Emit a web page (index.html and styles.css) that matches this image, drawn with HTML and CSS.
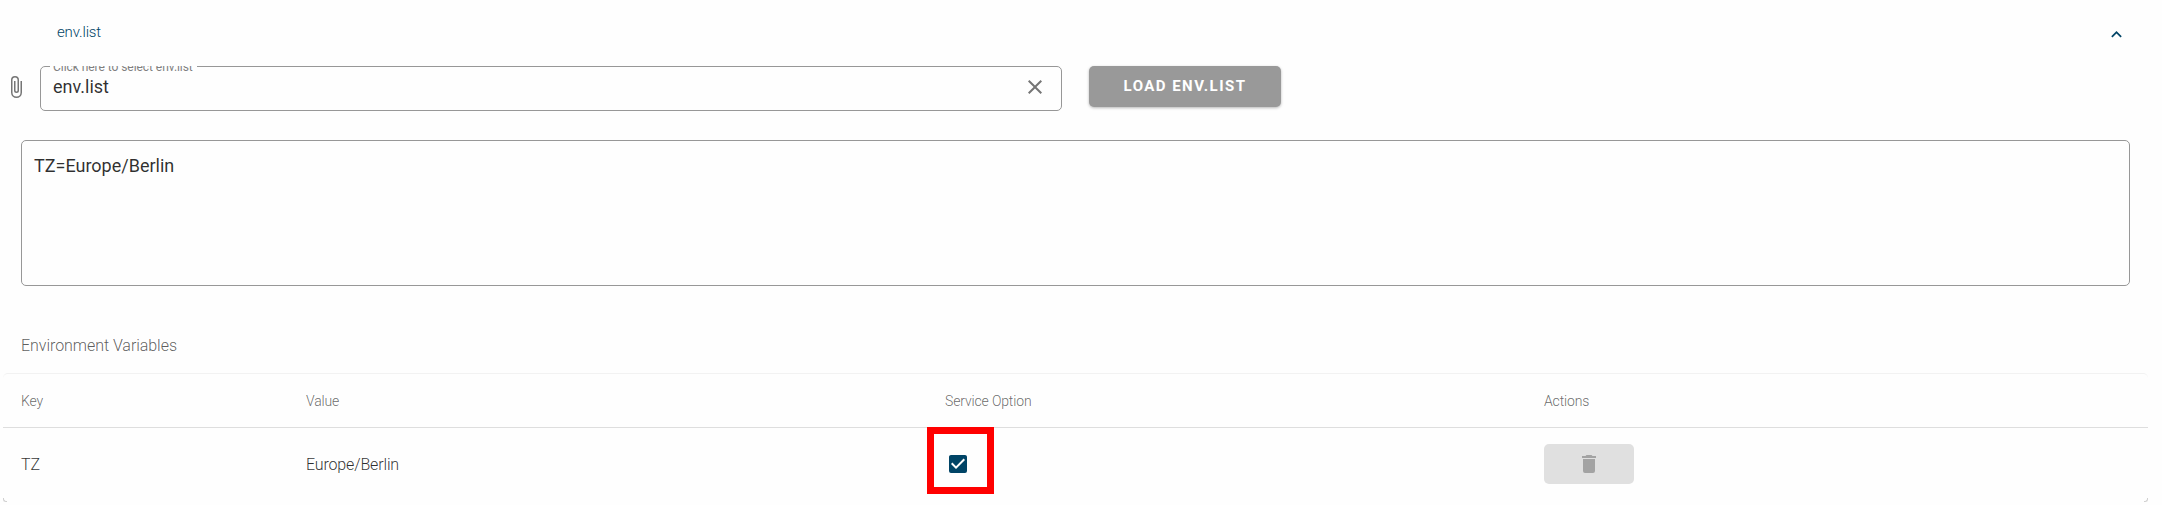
FILE: index.html
```html
<!DOCTYPE html>
<html lang="en">
<head>
<meta charset="utf-8">
<title>env.list</title>
<link rel="stylesheet" href="styles.css">
</head>
<body>
<main class="panel">
  <header class="panel-header">
    <span class="panel-title">env.list</span>
    <svg class="chevron" viewBox="0 0 24 24"><path d="M7.41,15.41L12,10.83L16.59,15.41L18,14L12,8L6,14L7.41,15.41Z"/></svg>
  </header>
  <div class="file-row">
    <svg class="icon clip" viewBox="0 0 24 24"><path d="M16.5,6V17.5A4,4 0 0,1 12.5,21.5A4,4 0 0,1 8.5,17.5V5A2.5,2.5 0 0,1 11,2.5A2.5,2.5 0 0,1 13.5,5V15.5A1,1 0 0,1 12.5,16.5A1,1 0 0,1 11.5,15.5V6H10V15.5A2.5,2.5 0 0,0 12.5,18A2.5,2.5 0 0,0 15,15.5V5A4,4 0 0,0 11,1A4,4 0 0,0 7,5V17.5A5.5,5.5 0 0,0 12.5,23A5.5,5.5 0 0,0 18,17.5V6H16.5Z"/></svg>
    <div class="file-field">
      <span class="label-clip"><span class="field-label">Click here to select env.list</span></span>
      <span class="file-name">env.list</span>
      <svg class="icon" viewBox="0 0 24 24"><path d="M19,6.41L17.59,5L12,10.59L6.41,5L5,6.41L10.59,12L5,17.59L6.41,19L12,13.41L17.59,19L19,17.59L13.41,12L19,6.41Z"/></svg>
    </div>
    <button class="load-button">LOAD ENV.LIST</button>
  </div>
  <div class="env-text">TZ=Europe/Berlin</div>
  <h2 class="subtitle">Environment Variables</h2>
  <section class="card">
    <div class="row head">
      <span>Key</span><span>Value</span><span>Service Option</span><span>Actions</span>
    </div>
    <div class="row">
      <span>TZ</span><span>Europe/Berlin</span>
      <span class="option-cell">
        <span class="highlight"></span>
        <svg class="checkbox" viewBox="0 0 24 24"><path d="M10,17L5,12L6.41,10.58L10,14.17L17.59,6.58L19,8M19,3H5C3.89,3 3,3.89 3,5V19A2,2 0 0,0 5,21H19A2,2 0 0,0 21,19V5C21,3.89 20.1,3 19,3Z"/></svg>
      </span>
      <span><button class="delete-button"><svg class="trash" viewBox="0 0 24 24"><path d="M19,4H15.5L14.5,3H9.5L8.5,4H5V6H19M6,19A2,2 0 0,0 8,21H16A2,2 0 0,0 18,19V7H6V19Z"/></svg></button></span>
    </div>
  </section>
</main>
</body>
</html>
```
FILE: styles.css
```css
* { box-sizing: border-box; }
html, body { overflow: hidden; }
body {
  margin: 0;
  background: #fefefe;
  color: rgba(0, 0, 0, 0.82);
  font-family: Roboto, sans-serif;
}
button { border: 0; padding: 0; font-family: inherit; }
svg { display: block; flex: none; }
.panel { display: flex; flex-direction: column; height: 505px; }
.panel-header {
  display: flex;
  justify-content: space-between;
  align-items: center;
  height: 66px;
  padding: 0 35px 2px 57px;
  color: #004466;
}
.panel-title {
  font-size: 15px;
  font-weight: 300;
  line-height: 20px;
  letter-spacing: -0.15px;
}
.chevron { width: 21px; height: 21px; fill: #004466; margin-top: 4px; }
.file-row { display: flex; align-items: flex-start; height: 74px; padding-left: 4px; }
.icon { width: 24px; height: 24px; fill: #757575; }
.clip { margin: 9px 12px 0 0; }
.file-field {
  position: relative;
  display: flex;
  align-items: center;
  justify-content: space-between;
  width: 1022px;
  height: 45px;
  padding: 0 14px 3px 12px;
  border: 1px solid #979797;
  border-radius: 5px;
}
.label-clip {
  position: absolute;
  left: 9px;
  top: -1px;
  width: 147px;
  height: 8px;
  padding-left: 3px;
  overflow: hidden;
  background: #fefefe;
}
.field-label {
  display: block;
  margin-top: -7px;
  font-size: 12px;
  line-height: 16px;
  letter-spacing: -0.05px;
  white-space: nowrap;
  color: #808080;
}
.file-name { font-size: 18px; line-height: 24px; }
.load-button {
  width: 192px;
  height: 41px;
  margin-left: 27px;
  padding-bottom: 2px;
  border-radius: 5px;
  background: #999;
  color: #fff;
  font-size: 15px;
  font-weight: 700;
  letter-spacing: 1.45px;
  box-shadow: 0 1px 3px rgba(0, 0, 0, 0.28);
}
.env-text {
  height: 146px;
  margin: 0 32px 0 21px;
  padding: 13px 12px;
  border: 1px solid #979797;
  border-radius: 5px;
  font-size: 18px;
  line-height: 24px;
}
.subtitle {
  margin: 48px 0 0 21px;
  color: rgba(0, 0, 0, 0.65);
  font-size: 16px;
  font-weight: 300;
  line-height: 24px;
  letter-spacing: -0.05px;
}
.card {
  position: relative;
  width: 2145px;
  height: 129px;
  margin: 15px 0 0 3px;
  border-top: 1px solid #f2f2f2;
  border-radius: 5px;
}
.card::before,
.card::after {
  content: "";
  position: absolute;
  bottom: 0;
  width: 3px;
  height: 3px;
  border-bottom: 1px solid #d0d0d0;
}
.card::before { left: 0; border-left: 1px solid #d0d0d0; border-bottom-left-radius: 3px; }
.card::after { right: 0; border-right: 1px solid #d0d0d0; border-bottom-right-radius: 3px; }
.row {
  display: grid;
  grid-template-columns: 285px 639px 599px 1fr;
  align-items: center;
  height: 72px;
  padding-left: 18px;
  font-size: 16px;
  font-weight: 300;
  letter-spacing: -0.15px;
}
.row.head {
  height: 54px;
  border-bottom: 1px solid #dedede;
  color: rgba(0, 0, 0, 0.6);
  font-size: 14px;
}
.option-cell { position: relative; }
.checkbox { width: 24px; height: 24px; margin-left: 1px; fill: #004466; }
.highlight {
  position: absolute;
  left: -18px;
  top: -25px;
  width: 67px;
  height: 67px;
  border: 7px solid #f00;
}
.delete-button {
  display: flex;
  align-items: center;
  justify-content: center;
  width: 90px;
  height: 40px;
  border-radius: 5px;
  background: #e0e0e0;
}
.trash { width: 24px; height: 24px; fill: #a3a3a3; }
```
